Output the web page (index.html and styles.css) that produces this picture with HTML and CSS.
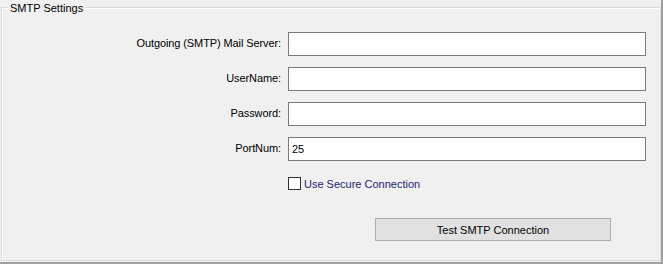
FILE: index.html
```html
<!DOCTYPE html>
<html lang="en">
<head>
    <meta charset="UTF-8">
    <title>SMTP Settings</title>
    <link rel="stylesheet" href="styles.css">
</head>
<body>
    <div class="panel">
        <div class="group">
            <span class="group-title">SMTP Settings</span>
            <div class="fields">
                <label class="field-label" for="server">Outgoing (SMTP) Mail Server:</label>
                <input type="text" class="field-input" id="server">
                <label class="field-label" for="username">UserName:</label>
                <input type="text" class="field-input" id="username">
                <label class="field-label" for="password">Password:</label>
                <input type="password" class="field-input" id="password">
                <label class="field-label" for="port">PortNum:</label>
                <input type="text" class="field-input" id="port" value="25">
            </div>
            <label class="check-row">
                <span class="check-box"></span>
                <span class="check-text">Use Secure Connection</span>
            </label>
            <button class="test-button">Test SMTP Connection</button>
        </div>
    </div>
</body>
</html>
```

FILE: styles.css
```css
:root {
    --panel-bg: #f0f0f0;
    --frame: #a0a0a0;
    --group-line: #dcdcdc;
    --input-border: #7a7a7a;
    --button-bg: #e1e1e1;
    --button-border: #adadad;
}

* {
    margin: 0;
    padding: 0;
    box-sizing: border-box;
    font-family: 'Liberation Sans', Arial, sans-serif;
    font-size: 11px;
}

body {
    background-color: var(--panel-bg);
    color: #000;
}

.panel {
    width: 663px;
    height: 264px;
    background-color: var(--panel-bg);
    border-right: 2px solid var(--frame);
    border-bottom: 2px solid var(--frame);
    padding: 7px 1px 0 1px;
}

.group {
    position: relative;
    width: 660px;
    height: 254px;
    border: 1px solid var(--group-line);
    box-shadow: inset 1px 1px 0 #fff;
    padding-top: 24px;
}

.group-title {
    position: absolute;
    top: -7px;
    left: 6px;
    padding: 0 2px;
    line-height: 14px;
    background-color: var(--panel-bg);
}

.fields {
    display: grid;
    grid-template-columns: 279px 358px;
    column-gap: 7px;
    row-gap: 11px;
    align-items: center;
}

.field-label {
    text-align: right;
    padding-bottom: 3px;
    letter-spacing: -0.1px;
}

.field-input {
    height: 24px;
    border: 1px solid var(--input-border);
    background-color: #fff;
    padding: 0 3px;
    outline: none;
}

.check-row {
    display: flex;
    align-items: center;
    gap: 3px;
    margin: 14px 0 0 286px;
    height: 17px;
    color: #1c2470;
}

.check-box {
    width: 13px;
    height: 13px;
    border: 1px solid #333;
    background-color: #fff;
}

.test-button {
    display: block;
    width: 236px;
    height: 23px;
    margin: 26px 0 0 373px;
    background-color: var(--button-bg);
    border: 1px solid var(--button-border);
    color: #000;
}
```
